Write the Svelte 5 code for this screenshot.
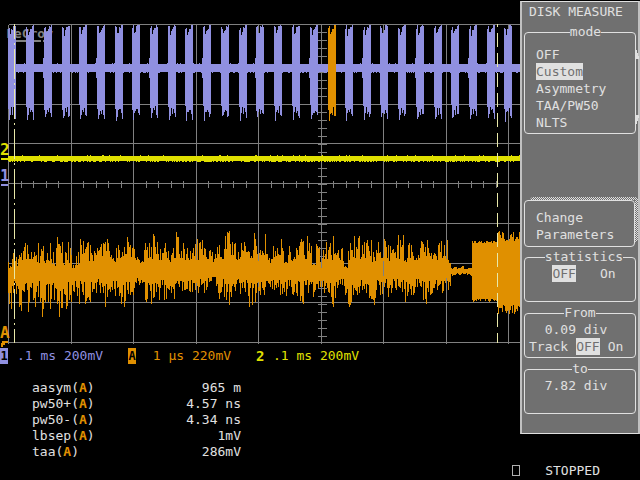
<script>
  const gridX = [8, 71, 133, 196, 258, 321, 383, 446, 508]
  const gridY = [24, 64, 104, 143, 183, 223, 263, 302, 342]

  const modes = ["OFF", "Custom", "Asymmetry", "TAA/PW50", "NLTS"]
  let mode = $state("Custom")
  let statistics = $state("OFF")
  let track = $state("OFF")

  const readouts = [
    { id: "1", color: "blue", boxed: true, text: ".1 ms 200mV" },
    { id: "A", color: "orange", boxed: true, text: " 1 µs 220mV" },
    { id: "2", color: "yellow", boxed: false, text: ".1 ms 200mV" }
  ]

  const measurements = [
    { name: "aasym", value: "965 m" },
    { name: "pw50+", value: "4.57 ns" },
    { name: "pw50-", value: "4.34 ns" },
    { name: "lbsep", value: "1mV" },
    { name: "taa", value: "286mV" }
  ]

  // small repeatable noise source, 0..1
  function noise(n) {
    const v = Math.sin(n * 127.1 + 11.7) * 43758.5453
    return v - Math.floor(v)
  }

  const column = (x, top, bottom) => `M${x} ${top}V${bottom}h1V${top}z`

  // channel 1: a burst about every 18 columns
  const burstStarts = [
    8, 26, 44, 62, 79, 97, 115, 132, 150, 168, 185, 203, 221, 239, 256, 274,
    292, 310, 328, 345, 363, 380, 398, 416, 434, 451, 469, 487, 504
  ]
  const burstTops = [28, 27, 34, 31, 28, 27, 25, 25]
  const burstBottoms = [108, 119, 115, 110, 112, 109, 114, 117]

  function burst(start, seed) {
    let d = ""
    for (let i = 0; i < 8; i++) {
      const top = Math.max(25, burstTops[i] + Math.round(noise(seed * 9 + i) * 4 - 2))
      const bottom = burstBottoms[i] + Math.round(noise(seed * 17 + i) * 6 - 3)
      d += column(start + i, top, bottom)
    }
    if (seed % 3 === 2) d += column(start - 1, 58, 78)
    return d
  }

  const bursts = burstStarts.map((x, i) => ({ d: burst(x, i), zoomed: x === 328 }))

  let baseline = ""
  let channel2 = ""
  for (let x = 8; x < 520; x++) {
    baseline += column(x, noise(x) > 0.9 ? 63 : 64, noise(x + 700) > 0.75 ? 73 : 72)
    channel2 += column(x, noise(x + 90) > 0.92 ? 155 : 156, noise(x + 300) > 0.6 ? 162 : 161)
  }

  // trace A, highest and lowest point in every four columns
  const peaks = [
    262, 253, 255, 251, 243, 252, 252, 243, 246, 253, 243, 252, 237, 242, 252, 242,
    265, 252, 239, 243, 242, 251, 248, 243, 239, 243, 258, 245, 252, 237, 242, 247,
    257, 261, 243, 243, 234, 242, 249, 243, 251, 248, 232, 243, 248, 251, 244, 239,
    240, 248, 250, 252, 245, 257, 232, 231, 242, 252, 243, 242, 251, 233, 246, 250,
    234, 258, 246, 248, 239, 262, 246, 257, 246, 239, 236, 243, 265, 244, 250, 242,
    243, 236, 250, 248, 268, 243, 236, 236, 245, 240, 240, 252, 242, 252, 239, 245,
    249, 235, 235, 258, 243, 252, 255, 241, 240, 248, 253, 243, 241, 240, 260
  ]
  const dips = [
    309, 293, 307, 311, 292, 312, 307, 297, 317, 302, 309, 300, 317, 308, 309, 302,
    292, 304, 295, 304, 302, 292, 293, 293, 307, 292, 296, 296, 304, 307, 295, 295,
    285, 283, 302, 304, 298, 300, 288, 300, 293, 299, 287, 291, 290, 292, 292, 293,
    285, 293, 282, 277, 299, 293, 300, 305, 291, 284, 294, 292, 307, 305, 293, 295,
    295, 287, 290, 288, 295, 296, 287, 295, 296, 304, 285, 293, 297, 288, 287, 293,
    297, 307, 288, 285, 295, 307, 295, 295, 290, 293, 299, 305, 290, 295, 288, 297,
    288, 290, 292, 302, 295, 295, 287, 300, 304, 295, 293, 290, 293, 283, 290
  ]

  let traceA = ""
  for (let x = 8; x < 520; x++) {
    const bin = Math.floor((x - 8) / 4)
    const n = noise(x + 40)
    const m = noise(x + 950)
    if (x < 451) {
      const peakHere = Math.floor(noise(bin + 5) * 4) === (x - 8) % 4
      const dipHere = Math.floor(noise(bin + 77) * 4) === (x - 8) % 4
      const floor = x < 80 ? 269 : 264
      const top = peakHere ? peaks[bin] : peaks[bin] + (floor - peaks[bin]) * (0.05 + n * 0.8)
      const bottom = dipHere ? dips[bin] : dips[bin] - (dips[bin] - 277) * m * 0.85
      traceA += column(x, Math.round(top), Math.round(bottom))
    } else if (x < 472) {
      traceA += column(x, 266 + Math.round(n * 3), 273 + Math.round(m * 3))
    } else if (x < 497) {
      traceA += column(x, 241 + Math.round(n * 2), 299 + Math.round(m * 3))
    } else {
      traceA += column(x, 231 + Math.round(n * 11), 302 + Math.round(m * 12))
    }
  }

  let ticks = ""
  for (let i = 1; i < 41; i++) ticks += `M${Math.round(8 + i * 12.5)} 180v7`
  for (let i = 1; i < 40; i++) ticks += `M317 ${24 + i * 8}h9`
</script>

{#snippet choice(options, current, pick)}
  {#each options as option}
    <button class="option" class:selected={current === option} aria-pressed={current === option} onclick={() => pick(option)}>{option}</button>
  {/each}
{/snippet}

<div class="instrument">
  <main>
    <svg class="scope" viewBox="0 0 520 347" role="img" aria-label="Waveform display">
      <g class="grid">
        {#each gridX as x}
          <path d="M{x} 24V343" />
        {/each}
        {#each gridY as y}
          <path d="M8 {y}H520" />
        {/each}
        <path d={ticks} />
      </g>

      <text class="brand" x="6" y="38">LeCroy</text>
      <path class="brand-line" d="M15 40h26v2H15zM43 40h3v2h-3z" />

      <path class="blue" d={baseline} />
      {#each bursts as b}
        <path class={b.zoomed ? "orange" : "blue"} d={b.d} />
      {/each}
      <path class="yellow" d={channel2} />
      <path class="orange" d={traceA} />
      <path class="grid" d="M321 240V267M196 240V259M196 282V286M258 250V260M258 281V286M383 260V275" />

      <path class="cursor" d="M14 24V343" stroke-dasharray="30 4 2 4" stroke-dashoffset="15" />
      <path class="cursor" d="M497 24V343" stroke-dasharray="14 6" stroke-dashoffset="11" />

      <text class="marker yellow" x="0" y="155">2</text>
      <rect class="yellow" x="1" y="158" width="7" height="2" />
      <text class="marker blue" x="0" y="181">1</text>
      <rect class="blue" x="1" y="184" width="7" height="2" />
      <text class="marker orange" x="0" y="338">A</text>
      <path class="orange" d="M2 341h6v2H5v2H3v2H1v-4h1z" />
    </svg>

    <div class="readouts">
      {#each readouts as r}
        <div class="readout {r.color}">
          <b class:boxed={r.boxed}>{r.id}</b>
          <span>{r.text}</span>
        </div>
      {/each}
    </div>

    <table>
      <tbody>
        {#each measurements as m}
          <tr>
            <th scope="row">{m.name}(<b>A</b>)</th>
            <td>{m.value}</td>
          </tr>
        {/each}
      </tbody>
    </table>
  </main>

  <aside>
    <h1>DISK MEASURE</h1>

    <fieldset class="modes">
      <legend>mode</legend>
      {@render choice(modes, mode, (v) => (mode = v))}
      <svg class="arrow up" viewBox="0 0 4 11" aria-hidden="true"><path d="M0 0h1v2h1v3h1v3h1v3H0z" /></svg>
      <svg class="arrow down" viewBox="0 0 4 11" aria-hidden="true"><path d="M0 0h4v3H3v3H2v3H1v2H0z" /></svg>
    </fieldset>

    <button class="change">Change<br />Parameters</button>

    <fieldset class="stats">
      <legend>statistics</legend>
      {@render choice(["OFF", "On"], statistics, (v) => (statistics = v))}
    </fieldset>

    <fieldset>
      <legend>From</legend>
      <output>0.09 div</output>
      <div class="track">
        <span>Track</span>
        {@render choice(["OFF", "On"], track, (v) => (track = v))}
      </div>
    </fieldset>

    <fieldset>
      <legend>to</legend>
      <output>7.82 div</output>
    </fieldset>
  </aside>

  <footer>
    <span class="lamp"></span>
    <span>STOPPED</span>
  </footer>
</div>

<style>
  :global(body) {
    background: #000;
  }

  .instrument {
    --blue: #9090e0;
    --orange: #e09000;
    --yellow: #e0e000;
    --light: #e0e0e0;
    --panel: #707070;
    display: grid;
    grid-template-columns: 1fr 120px;
    align-items: start;
    color: var(--light);
    font: 13px/17px "DejaVu Sans Mono", "Liberation Mono", monospace;
  }

  .scope {
    display: block;
    width: 100%;
    shape-rendering: crispEdges;
  }

  .grid path,
  path.grid {
    stroke: #808080;
    stroke-width: 1;
    fill: none;
    transform: translate(0.5px, 0.5px);
  }

  .cursor {
    stroke: #e8e8a8;
    fill: none;
    transform: translate(0.5px, 0);
  }

  .brand {
    font-size: 13px;
    font-weight: bold;
    fill: #808080;
  }

  .brand-line {
    fill: #808080;
  }

  .marker {
    font-size: 16px;
    font-weight: bold;
  }

  .blue {
    fill: var(--blue);
    color: var(--blue);
  }

  .orange {
    fill: var(--orange);
    color: var(--orange);
  }

  .yellow {
    fill: var(--yellow);
    color: var(--yellow);
  }

  .readouts {
    display: grid;
    grid-template-columns: 128px 128px 1fr;
    line-height: 16px;
    padding-top: 1px;
  }

  .readout {
    display: flex;
    gap: 9px;
    white-space: pre;
  }

  .readout b {
    width: 8px;
    font-size: 14px;
  }

  .readout .boxed {
    background: currentColor;
    font-size: 12px;
    text-align: center;
    -webkit-text-fill-color: #000;
  }

  table {
    width: 209px;
    margin: 16px 0 0 32px;
    border-collapse: collapse;
    line-height: 16px;
  }

  th,
  td {
    padding: 0;
    text-align: left;
    font-weight: normal;
  }

  td {
    text-align: right;
  }

  th b {
    color: var(--orange);
  }

  aside {
    margin-top: 1px;
    padding: 1px 2px 16px;
    background: var(--panel);
    border: solid var(--light);
    border-width: 1px 2px;
    border-left-color: #c0c0c0;
    border-right-color: #c0c0c0;
  }

  h1 {
    margin: 0 0 4px 5px;
    font: inherit;
    white-space: nowrap;
  }

  button {
    padding: 0;
    border: 0;
    background: none;
    color: inherit;
    font: inherit;
    cursor: pointer;
  }

  fieldset {
    box-sizing: border-box;
    min-width: 0;
    min-height: 53px;
    margin: 0 0 3px;
    padding: 0;
    border: 1px solid var(--light);
    border-radius: 4px;
    text-align: center;
  }

  legend {
    margin: 0 auto;
    padding: 0;
    line-height: 16px;
  }

  output {
    display: block;
    padding-right: 8px;
  }

  .selected {
    background: var(--light);
    color: var(--panel);
  }

  .modes {
    position: relative;
    display: flex;
    flex-direction: column;
    align-items: flex-start;
    margin-bottom: 66px;
    padding: 6px 0 2px 11px;
  }

  .arrow {
    position: absolute;
    right: -4px;
    width: 4px;
    height: 11px;
    fill: var(--light);
  }

  .up {
    top: 8px;
  }

  .down {
    bottom: 7px;
  }

  .change {
    position: relative;
    display: block;
    box-sizing: border-box;
    width: calc(100% - 1px);
    margin-bottom: 2px;
    padding: 8px 0 3px 11px;
    border: 1px solid var(--light);
    border-radius: 4px;
    text-align: left;
  }

  /* hatched edge of the sheet behind the button */
  .change::before {
    content: "";
    position: absolute;
    inset: -4px -4px 4px 5px;
    border: solid transparent;
    border-width: 3px 3px 0 0;
    border-radius: 3px;
    background: repeating-conic-gradient(var(--light) 0 25%, var(--panel) 0 50%) 0 0 / 2px 2px border-box;
    mask: linear-gradient(#000 0 0) top / 100% 3px no-repeat, linear-gradient(#000 0 0) right / 3px 100% no-repeat;
    mask-origin: border-box;
  }

  .stats .option + .option {
    margin-left: 24px;
  }

  .stats {
    padding-left: 8px;
  }

  .track {
    display: flex;
    gap: 8px;
    padding-left: 4px;
  }

  footer {
    grid-column: 1 / -1;
    display: flex;
    align-items: center;
    justify-content: flex-end;
    gap: 25px;
    padding: 2px 40px 0 0;
  }

  .lamp {
    width: 6px;
    height: 9px;
    border: 1px solid #b0b0b0;
  }
</style>
